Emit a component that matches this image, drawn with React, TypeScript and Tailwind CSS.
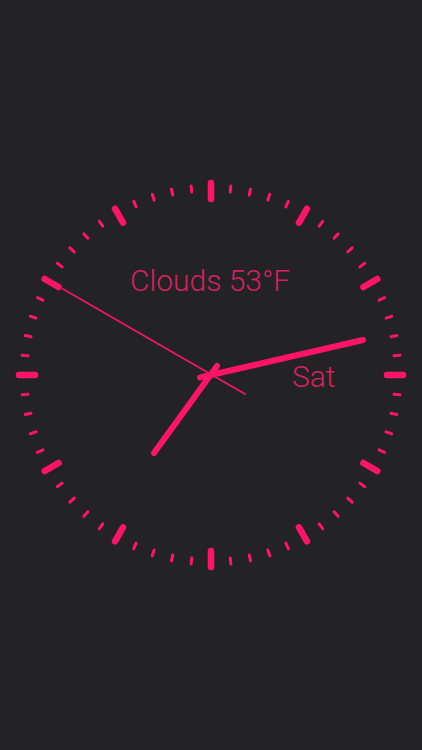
import React from 'react'

const CX = 211
const CY = 211

function polar(r: number, deg: number) {
  const a = ((deg - 90) * Math.PI) / 180
  return { x: CX + r * Math.cos(a), y: CY + r * Math.sin(a) }
}

function Ticks() {
  const ticks = []
  for (let i = 0; i < 60; i++) {
    const deg = i * 6
    const hour = i % 5 === 0
    const a = polar(hour ? 176 : 184, deg)
    const b = polar(hour ? 192 : 190, deg)
    ticks.push(
      <line
        key={i}
        x1={a.x}
        y1={a.y}
        x2={b.x}
        y2={b.y}
        stroke="#ff1468"
        strokeWidth={hour ? 6.5 : 3}
        strokeLinecap="round"
      />
    )
  }
  return <>{ticks}</>
}

export default function App() {
  return (
    <div className="h-[750px] w-full bg-[#232325] flex items-center justify-center overflow-hidden">
      <svg width="422" height="422" viewBox="0 0 422 422" className="block">
        <Ticks />
        <text
          x="130"
          y="127"
          fill="#d91f60"
          fontSize="30"
          fontWeight={300}
          fontFamily="Roboto, 'Liberation Sans', sans-serif"
        >
          Clouds 53°F
        </text>
        <text
          x="292"
          y="223"
          fill="#d91f60"
          fontSize="30"
          fontWeight={300}
          fontFamily="Roboto, 'Liberation Sans', sans-serif"
        >
          Sat
        </text>
        {/* hour hand */}
        <line x1="217" y1="202" x2="154" y2="289" stroke="#ff1468" strokeWidth="6" strokeLinecap="round" />
        {/* minute hand */}
        <line x1="200" y1="213.5" x2="363" y2="176" stroke="#ff1468" strokeWidth="6" strokeLinecap="round" />
        {/* second hand */}
        <line x1="245" y1="230" x2="63" y2="125" stroke="#ec1762" strokeWidth="2" strokeLinecap="round" />
      </svg>
    </div>
  )
}
